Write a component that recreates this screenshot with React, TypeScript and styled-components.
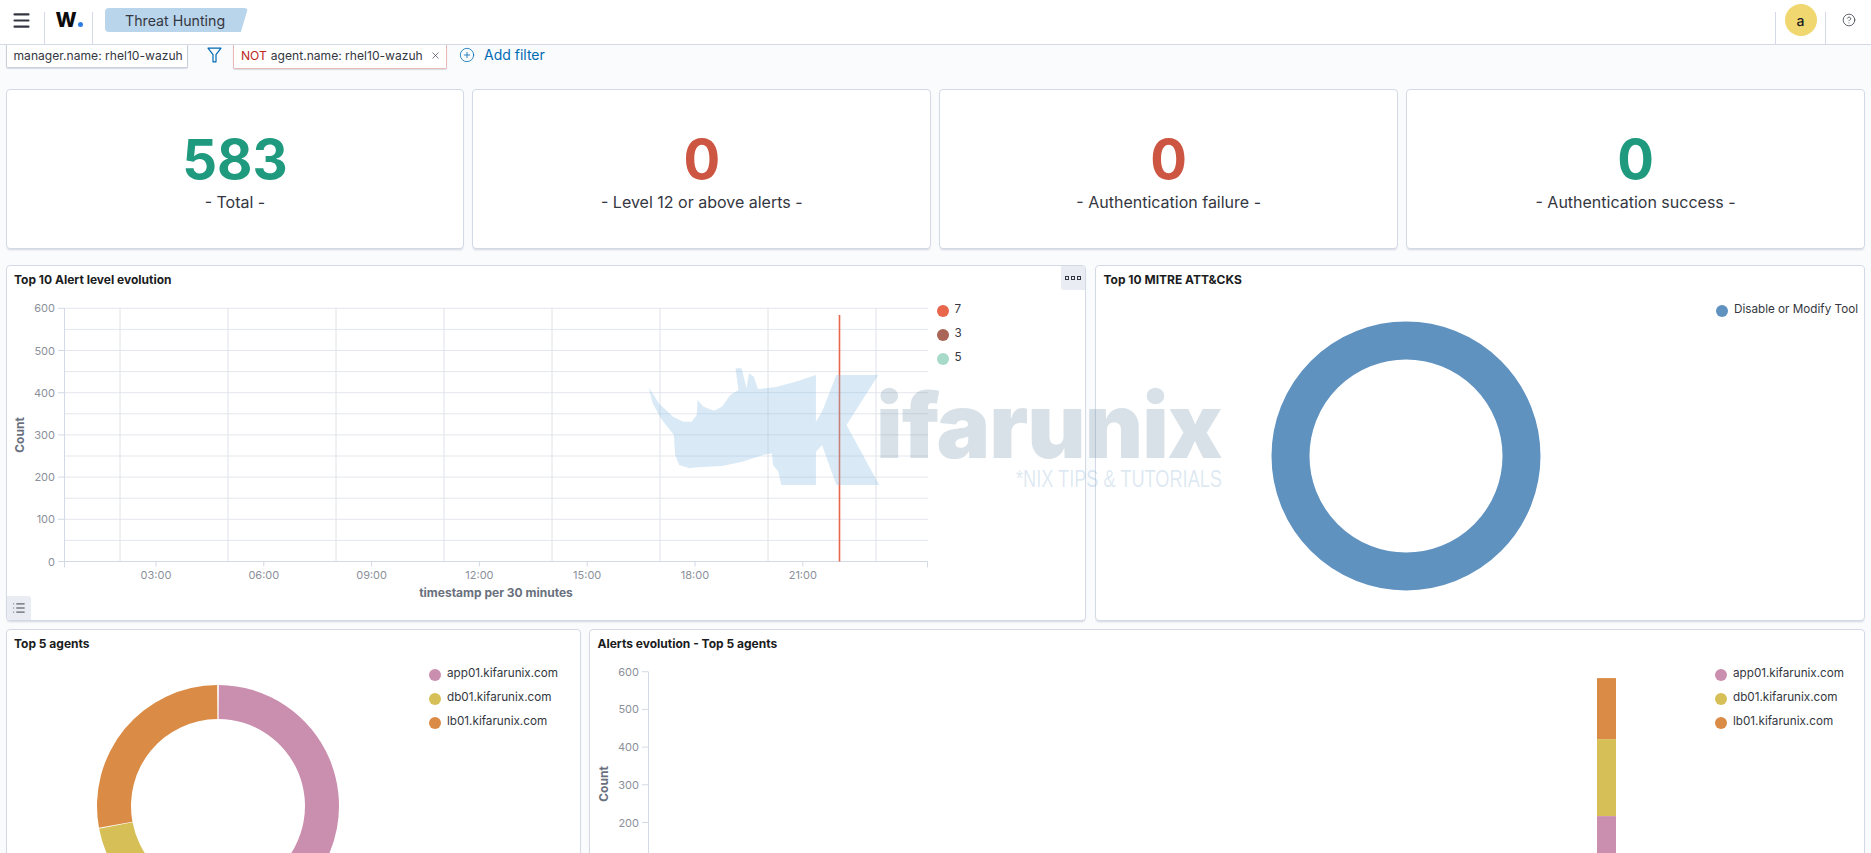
import React from 'react';
import styled, { createGlobalStyle } from 'styled-components';
import { CirclePlus, CircleHelp, Menu, X, List } from 'lucide-react';

const GlobalStyle = createGlobalStyle`
  html, body {
    margin: 0;
    height: 100%;
    overflow: hidden;
    background: #fafbfd;
    font-family: Inter, 'Liberation Sans', sans-serif;
    color: #343741;
  }
`;

const Page = styled.div`
  position: relative;
  width: 1871px;
  height: 853px;
  overflow: hidden;
`;

const Header = styled.header`
  position: relative;
  z-index: 2;
  display: flex;
  align-items: stretch;
  height: 44px;
  background: #fff;
  border-bottom: 1px solid #d3dae6;
`;

const separator = `
  content: '';
  position: absolute;
  top: 12px;
  bottom: 0;
  width: 1px;
  background: #d3dae6;
`;

const HeaderCell = styled.div<{ $w: number; $line?: boolean; $lineLeft?: boolean; $shift?: number }>`
  display: flex;
  align-items: center;
  justify-content: center;
  width: ${(p) => p.$w}px;
  height: 100%;
  padding: 0 ${(p) => p.$shift ?? 0}px 4px 0;
  box-sizing: border-box;
  position: relative;
  ${(p) => p.$line && `&::after { ${separator} right: 0; }`}
  ${(p) => p.$lineLeft && `&::before { ${separator} left: 0; }`}
`;

const Logo = styled.div`
  display: flex;
  align-items: flex-end;
  gap: 1px;
  font-size: 20px;
  font-weight: 800;
  line-height: 15px;
  color: #0b0b0d;
`;

const LogoDot = styled.i`
  width: 5px;
  height: 5px;
  margin-bottom: 1px;
  border-radius: 50%;
  background: #2f7de1;
`;

const Breadcrumb = styled.div`
  display: flex;
  align-items: center;
  margin: 8px 0 0 12px;
  height: 24px;
  width: 143px;
  padding-left: 20px;
  box-sizing: border-box;
  font-size: 14.2px;
  background: #b9d5eb;
  border-radius: 4px;
  clip-path: polygon(0 0, 100% 0, 95% 100%, 0 100%);
`;

const Spacer = styled.div`
  flex: 1;
`;

const Avatar = styled.div`
  width: 32px;
  height: 32px;
  border-radius: 50%;
  background: #f0d76f;
  display: flex;
  align-items: center;
  justify-content: center;
  font-size: 14px;
  font-weight: 500;
  color: #1a1c21;
`;

const Content = styled.main`
  padding: 0 6px 0 5.5px;
`;

const FilterBar = styled.div`
  display: flex;
  align-items: flex-start;
  height: 24px;
`;

const FilterChip = styled.div<{ $w: number; $negated?: boolean }>`
  display: flex;
  align-items: center;
  width: ${(p) => p.$w}px;
  height: ${(p) => (p.$negated ? 24 : 23)}px;
  box-sizing: border-box;
  padding: 0 8px 2px 7px;
  gap: 4px;
  font-size: 12.1px;
  white-space: nowrap;
  background: #fff;
  border: 1px solid ${(p) => (p.$negated ? '#eab9b4' : '#c9cfdb')};
  border-top: none;
  border-radius: 0 0 2px 2px;
  box-shadow: 0 1px 1px rgba(152, 162, 179, 0.35);
`;

const Not = styled.span`
  color: #bd271e;
`;

const ChipClose = styled(X)`
  margin-left: auto;
  margin-right: -3px;
  color: #343741;
  flex: none;
`;

const FunnelBox = styled.div`
  width: 45px;
  box-sizing: border-box;
  display: flex;
  justify-content: center;
  padding: 2px 0 0 7px;
`;

const AddFilter = styled.div`
  display: flex;
  align-items: center;
  gap: 9px;
  height: 19px;
  margin-left: 12px;
  font-size: 14px;
  color: #006bb4;
`;

const StatRow = styled.section`
  display: grid;
  grid-template-columns: repeat(4, 1fr);
  gap: 8px;
  margin-top: 20px;
`;

const Card = styled.div`
  background: #fff;
  border: 1px solid #d3dae6;
  border-radius: 4px;
  box-sizing: border-box;
  box-shadow: 0 2px 2px -1px rgba(152, 162, 179, 0.4);
`;

const StatCard = styled(Card)`
  height: 160px;
  display: flex;
  flex-direction: column;
  align-items: center;
  padding-top: 35px;
`;

const StatValue = styled.div<{ $tone: string }>`
  font-size: 54.5px;
  line-height: 68px;
  font-weight: 700;
  color: ${(p) => p.$tone};
`;

const StatLabel = styled.div`
  font-size: 16px;
  line-height: 24px;
  margin-top: -3px;
  color: #343741;
`;

const Row = styled.section<{ $cols: string; $gap: number; $top: number; $h: number }>`
  display: grid;
  grid-template-columns: ${(p) => p.$cols};
  gap: ${(p) => p.$gap}px;
  margin-top: ${(p) => p.$top}px;
  height: ${(p) => p.$h}px;
`;

const Panel = styled(Card)`
  position: relative;
  display: flex;
  flex-direction: column;
  overflow: hidden;
`;

const PanelTitle = styled.div`
  height: 26px;
  box-sizing: border-box;
  padding: 1px 0 0 7.5px;
  line-height: 25px;
  font-size: 12px;
  font-weight: 700;
  color: #1a1c21;
`;

const PanelBody = styled.div`
  display: flex;
  flex: 1;
  min-height: 0;
  justify-content: space-between;
`;

const ChartSvg = styled.svg`
  display: block;
  flex: none;
  font-family: Inter, 'Liberation Sans', sans-serif;
`;

const Legend = styled.ul<{ $right: number }>`
  list-style: none;
  flex: none;
  box-sizing: border-box;
  margin: 0 ${(p) => p.$right}px 0 0;
  padding: 10px 0 0;
  width: 142px;
  overflow: hidden;
`;

const LegendItem = styled.li`
  display: flex;
  align-items: flex-start;
  height: 24px;
  font-size: 11.7px;
  line-height: 14px;
  white-space: nowrap;
  color: #343741;
`;

const Dot = styled.i<{ $c: string }>`
  flex: none;
  width: 12px;
  height: 12px;
  margin: 3px 6px 0 0;
  border-radius: 50%;
  background: ${(p) => p.$c};
`;

const OptionsButton = styled.div`
  position: absolute;
  top: 0;
  right: 0;
  width: 24px;
  height: 24px;
  display: flex;
  align-items: center;
  justify-content: center;
  gap: 2px;
  background: #e9edf3;
  border-radius: 0 3px 0 3px;
`;

const OptionDot = styled.i`
  width: 4px;
  height: 4px;
  border: 1px solid #343741;
  box-sizing: border-box;
`;

const LegendToggle = styled.div`
  position: absolute;
  left: 0;
  bottom: 0;
  width: 24px;
  height: 24px;
  display: flex;
  align-items: center;
  justify-content: center;
  background: #e9edf3;
  border-radius: 0 3px 0 3px;
  color: #1a1c21;
`;

const Watermark = styled.div`
  position: absolute;
  left: 620px;
  top: 340px;
  width: 640px;
  height: 300px;
  pointer-events: none;
  z-index: 1;
`;

const WatermarkShape = styled.svg`
  position: absolute;
  inset: 0;
  width: 100%;
  height: 100%;
`;

const WatermarkName = styled.div`
  position: absolute;
  left: 256px;
  top: 48px;
  font-size: 90px;
  line-height: 76px;
  font-weight: 900;
  letter-spacing: -1px;
  white-space: nowrap;
  color: rgba(100, 135, 160, 0.25);
`;

const WatermarkTag = styled.div`
  position: absolute;
  left: 396px;
  top: 126px;
  font-family: 'Liberation Sans', sans-serif;
  font-size: 23px;
  line-height: 26px;
  white-space: nowrap;
  transform: scaleX(0.79);
  transform-origin: left center;
  color: rgba(120, 165, 205, 0.25);
`;

const green = '#1f9a7f';
const red = '#cc5642';
const stats = [
  { value: '583', label: '- Total -', tone: green },
  { value: '0', label: '- Level 12 or above alerts -', tone: red },
  { value: '0', label: '- Authentication failure -', tone: red },
  { value: '0', label: '- Authentication success -', tone: green },
];

const agents = [
  { name: 'app01.kifarunix.com', color: '#ca8eae' },
  { name: 'db01.kifarunix.com', color: '#d6bf57' },
  { name: 'lb01.kifarunix.com', color: '#da8b45' },
];

const levels = [
  { name: '7', color: '#e7664c' },
  { name: '3', color: '#aa6556' },
  { name: '5', color: '#a8dac9' },
];

const arc = (cx: number, cy: number, r: number, ri: number, from: number, to: number) => {
  const pt = (rad: number, deg: number) => {
    const a = ((deg - 90) * Math.PI) / 180;
    return `${(cx + rad * Math.cos(a)).toFixed(2)} ${(cy + rad * Math.sin(a)).toFixed(2)}`;
  };
  const large = to - from > 180 ? 1 : 0;
  return `M${pt(r, from)}A${r} ${r} 0 ${large} 1 ${pt(r, to)}L${pt(ri, to)}A${ri} ${ri} 0 ${large} 0 ${pt(ri, from)}Z`;
};

const axisGrey = '#8b909a';
const lineGrey = '#e4e7ed';

function AlertChart() {
  const hours = ['03:00', '06:00', '09:00', '12:00', '15:00', '18:00', '21:00'];
  const y0 = 269.5;
  const step = 21.1;
  return (
    <ChartSvg width={930} height={328}>
      {Array.from({ length: 13 }, (_, i) => (
        <line key={i} x1={57} x2={921} y1={y0 - i * step} y2={y0 - i * step} stroke={lineGrey} />
      ))}
      {Array.from({ length: 8 }, (_, i) => (
        <line key={i} x1={113 + i * 108} x2={113 + i * 108} y1={16} y2={y0} stroke="#dfe2e9" />
      ))}
      <line x1={57.5} x2={57.5} y1={16} y2={y0 + 6} stroke="#d3dae6" />
      <line x1={57} x2={921} y1={y0} y2={y0} stroke="#d3dae6" />
      <line x1={920.5} x2={920.5} y1={y0} y2={y0 + 6} stroke="#d3dae6" />
      {[0, 100, 200, 300, 400, 500, 600].map((v) => (
        <g key={v}>
          <text x={48} y={y0 - v * 0.422 + 4} textAnchor="end" fontSize={11} fill={axisGrey}>
            {v}
          </text>
          <line x1={51} x2={57} y1={y0 - v * 0.422} y2={y0 - v * 0.422} stroke="#d3dae6" />
        </g>
      ))}
      {hours.map((h, i) => (
        <g key={h}>
          <line x1={149 + i * 107.8} x2={149 + i * 107.8} y1={y0} y2={y0 + 5} stroke="#d3dae6" />
          <text x={149 + i * 107.8} y={y0 + 17} textAnchor="middle" fontSize={11} fill={axisGrey}>
            {h}
          </text>
        </g>
      ))}
      <line x1={832.5} x2={832.5} y1={23} y2={y0} stroke="#e7664c" strokeWidth={1.6} />
      <text x={489} y={305} textAnchor="middle" fontSize={12} fontWeight={700} fill="#69707d">
        timestamp per 30 minutes
      </text>
      <text
        transform="translate(17 143) rotate(-90)"
        textAnchor="middle"
        fontSize={12}
        fontWeight={700}
        fill="#69707d"
      >
        Count
      </text>
    </ChartSvg>
  );
}

function MitreChart() {
  return (
    <ChartSvg width={620} height={328}>
      <circle cx={310} cy={164} r={115.5} fill="none" stroke="#6092c0" strokeWidth={38} />
    </ChartSvg>
  );
}

function AgentsDonut() {
  const slices = [
    { from: 0.4, to: 134, color: agents[0].color },
    { from: 134.4, to: 259.2, color: agents[1].color },
    { from: 259.6, to: 359.6, color: agents[2].color },
  ];
  return (
    <ChartSvg width={420} height={198}>
      {slices.map((s) => (
        <path key={s.color} d={arc(211, 150, 121, 87, s.from, s.to)} fill={s.color} />
      ))}
    </ChartSvg>
  );
}

function EvolutionChart() {
  const y = (v: number) => 15.7 + (600 - v) * 0.377;
  return (
    <ChartSvg width={1125} height={198}>
      <line x1={58.5} x2={58.5} y1={y(600)} y2={198} stroke="#d3dae6" />
      {[200, 300, 400, 500, 600].map((v) => (
        <g key={v}>
          <text x={49} y={y(v) + 4} textAnchor="end" fontSize={11} fill={axisGrey}>
            {v}
          </text>
          <line x1={52} x2={58} y1={y(v)} y2={y(v)} stroke="#d3dae6" />
        </g>
      ))}
      <text
        transform="translate(18 128) rotate(-90)"
        textAnchor="middle"
        fontSize={12}
        fontWeight={700}
        fill="#69707d"
      >
        Count
      </text>
      <rect x={1007} y={y(583)} width={19} height={61} fill="#da8b45" />
      <rect x={1007} y={y(583) + 61} width={19} height={77} fill="#d6bf57" />
      <rect x={1007} y={y(583) + 138} width={19} height={70} fill="#ca8eae" />
    </ChartSvg>
  );
}

export default function App() {
  return (
    <Page>
      <GlobalStyle />
      <Header>
        <HeaderCell $w={45} $line $shift={3}>
          <Menu size={21} strokeWidth={2.4} color="#343741" />
        </HeaderCell>
        <HeaderCell $w={48} $line>
          <Logo>
            W
            <LogoDot />
          </Logo>
        </HeaderCell>
        <Breadcrumb>Threat Hunting</Breadcrumb>
        <Spacer />
        <HeaderCell $w={51} $line $lineLeft>
          <Avatar>a</Avatar>
        </HeaderCell>
        <HeaderCell $w={45}>
          <CircleHelp size={14} strokeWidth={1.3} color="#343741" />
        </HeaderCell>
      </Header>
      <Content>
        <FilterBar>
          <FilterChip $w={182.5}>manager.name: rhel10-wazuh</FilterChip>
          <FunnelBox>
            <svg width="15" height="16" viewBox="0 0 15 16" fill="none" stroke="#006bb4" strokeWidth="1.2">
              <path d="M1 1.2h13L9 7.6v7.2H6V7.6z" strokeLinejoin="round" />
            </svg>
          </FunnelBox>
          <FilterChip $w={214} $negated>
            <Not>NOT</Not> agent.name: rhel10-wazuh
            <ChipClose size={11} strokeWidth={1.4} />
          </FilterChip>
          <AddFilter>
            <CirclePlus size={16} strokeWidth={1.2} />
            Add filter
          </AddFilter>
        </FilterBar>
        <StatRow>
          {stats.map((s) => (
            <StatCard key={s.label}>
              <StatValue $tone={s.tone}>{s.value}</StatValue>
              <StatLabel>{s.label}</StatLabel>
            </StatCard>
          ))}
        </StatRow>
        <Row $cols="1080.5px 1fr" $gap={9} $top={16} $h={356}>
          <Panel>
            <PanelTitle>Top 10 Alert level evolution</PanelTitle>
            <PanelBody>
              <AlertChart />
              <Legend $right={11}>
                {levels.map((l) => (
                  <LegendItem key={l.name}>
                    <Dot $c={l.color} />
                    {l.name}
                  </LegendItem>
                ))}
              </Legend>
            </PanelBody>
            <OptionsButton>
              <OptionDot />
              <OptionDot />
              <OptionDot />
            </OptionsButton>
            <LegendToggle>
              <List size={14} strokeWidth={1.4} />
            </LegendToggle>
          </Panel>
          <Panel>
            <PanelTitle>Top 10 MITRE ATT&amp;CKS</PanelTitle>
            <PanelBody>
              <MitreChart />
              <Legend $right={11}>
                <LegendItem>
                  <Dot $c="#6092c0" />
                  Disable or Modify Tools
                </LegendItem>
              </Legend>
            </PanelBody>
          </Panel>
        </Row>
        <Row $cols="575.5px 1fr" $gap={8} $top={8} $h={230}>
          <Panel>
            <PanelTitle>Top 5 agents</PanelTitle>
            <PanelBody>
              <AgentsDonut />
              <Legend $right={9}>
                {agents.map((a) => (
                  <LegendItem key={a.name}>
                    <Dot $c={a.color} />
                    {a.name}
                  </LegendItem>
                ))}
              </Legend>
            </PanelBody>
          </Panel>
          <Panel>
            <PanelTitle>Alerts evolution - Top 5 agents</PanelTitle>
            <PanelBody>
              <EvolutionChart />
              <Legend $right={10}>
                {agents.map((a) => (
                  <LegendItem key={a.name}>
                    <Dot $c={a.color} />
                    {a.name}
                  </LegendItem>
                ))}
              </Legend>
            </PanelBody>
          </Panel>
        </Row>
      </Content>
      <Watermark>
        <WatermarkShape viewBox="0 0 1568 900" preserveAspectRatio="none">
          <path
            fill="rgba(130, 185, 225, 0.3)"
            d="M70 142L95 190L130 230L155 245L175 245L188 225L190 180L205 200L230 212L250 200L270 165L290 150L283 85L298 85L310 145L316 100L328 110L338 147L380 142L430 125L480 105L480 245L495 215L530 105L633 105L555 255L635 435L530 435L495 315L480 335L480 435L395 435L388 395L375 375L372 340L350 345L300 365L250 378L190 382L170 385L145 375L135 345L132 285L100 235L80 190Z"
          />
        </WatermarkShape>
        <WatermarkName>ifarunix</WatermarkName>
        <WatermarkTag>*NIX TIPS &amp; TUTORIALS</WatermarkTag>
      </Watermark>
    </Page>
  );
}
